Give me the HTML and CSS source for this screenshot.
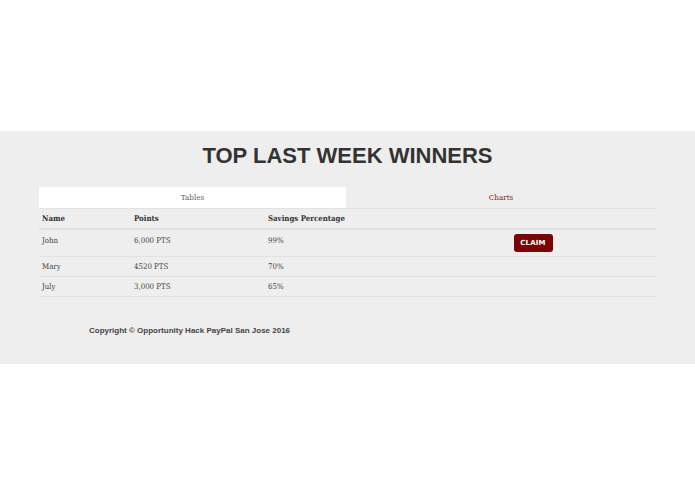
FILE: index.html
```html
<!DOCTYPE html>
<html>
<head>
<meta charset="utf-8">
<link rel="stylesheet" href="styles.css">
</head>
<body>
<div class="spacer"></div>
<section class="winners">
  <h2 class="title">TOP LAST WEEK WINNERS</h2>
  <div class="container">
    <div class="tabs">
      <div class="tab active">Tables</div>
      <div class="tab">Charts</div>
    </div>
    <table class="board">
      <colgroup><col class="c1"><col class="c2"><col class="c3"><col class="c4"></colgroup>
      <thead>
        <tr><th>Name</th><th>Points</th><th>Savings Percentage</th><th></th></tr>
      </thead>
      <tbody>
        <tr class="tall"><td>John</td><td>6,000 PTS</td><td>99%</td><td class="act"><button class="claim">CLAIM</button></td></tr>
        <tr><td>Mary</td><td>4520 PTS</td><td>70%</td><td></td></tr>
        <tr><td>July</td><td>3,000 PTS</td><td>65%</td><td></td></tr>
      </tbody>
    </table>
    <p class="copy">Copyright © Opportunity Hack PayPal San Jose 2016</p>
  </div>
</section>
</body>
</html>
```
FILE: styles.css
```css
html, body { margin: 0; padding: 0; background: #fff; }
.spacer { height: 131px; }
.winners { background: #eeeeee; height: 233px; box-sizing: border-box; padding-top: 12px; }
.title {
  margin: 0; text-align: center;
  font-family: "Liberation Sans", sans-serif; font-weight: bold;
  font-size: 22px; line-height: 26px; color: #333;
}
.container { width: 617px; margin: 18px auto 0; }
.tabs { display: flex; border-bottom: 1px solid #e2e2e2; }
.tab {
  flex: 1; height: 21px; line-height: 21px; text-align: center;
  font-family: "DejaVu Serif Condensed", "DejaVu Serif", serif; font-size: 8px; color: #8b2020;
}
.tab.active { flex: 0 0 307px; background: #fff; color: #666; }
.board { width: 100%; border-collapse: collapse; table-layout: fixed;
  font-family: "DejaVu Serif Condensed", "DejaVu Serif", serif; font-size: 7.8px; color: #444; }
.c1 { width: 92px; } .c2 { width: 134px; } .c3 { width: 145px; } .c4 { width: 246px; }
.board th { text-align: left; font-weight: bold; color: #333; height: 19px; padding: 0 3px; border-bottom: 2px solid #e0e0e0; }
.board td { height: 19px; padding: 0 3px; border-bottom: 1px solid #e2e2e2; vertical-align: middle; }
.board tr.tall td { height: 27px; vertical-align: top; padding-top: 6px; box-sizing: border-box; }
.board tr.tall td.act { padding-top: 4px; }
.claim {
  display: block; margin: 0 auto;
  background: #7c0303; color: #fff; border: none; border-radius: 3px;
  width: 39px; height: 18px; padding: 0;
  font-family: "DejaVu Sans", sans-serif; font-weight: bold; font-size: 7px; letter-spacing: 0.2px;
}
.copy {
  margin: 29px 0 0 50px;
  font-family: "Liberation Sans", sans-serif; font-weight: bold; font-size: 8px; color: #444;
}
```
